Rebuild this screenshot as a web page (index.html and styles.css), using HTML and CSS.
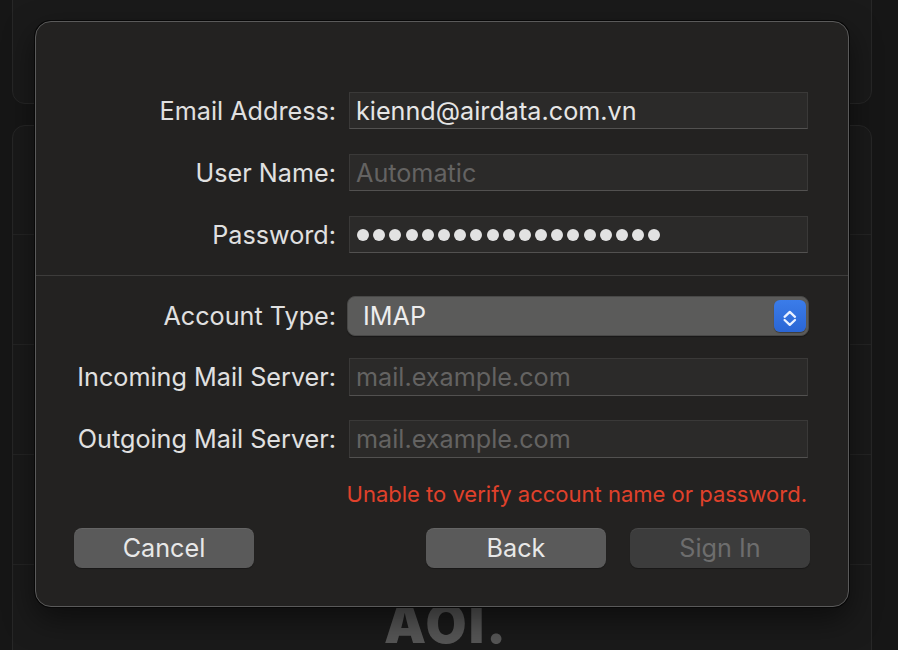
FILE: index.html
```html
<!DOCTYPE html>
<html lang="en">
<head>
<meta charset="utf-8">
<title>Account</title>
<link rel="stylesheet" href="styles.css">
</head>
<body>
<div class="backdrop">
  <div class="card card-top"></div>
  <div class="card card-list">
    <div class="list-row"></div>
    <div class="list-row"></div>
    <div class="list-row"></div>
    <div class="list-row"></div>
    <div class="list-row logo-row"><div class="logo">AOI.</div></div>
  </div>
</div>

<div class="dialog">
  <div class="section section-account">
    <div class="form-row">
      <div class="label">Email Address:</div>
      <div class="field"><span class="value">kiennd@airdata.com.vn</span></div>
    </div>
    <div class="form-row">
      <div class="label">User Name:</div>
      <div class="field"><span class="placeholder">Automatic</span></div>
    </div>
    <div class="form-row">
      <div class="label">Password:</div>
      <div class="field"><span class="dots" aria-label="password"><i></i><i></i><i></i><i></i><i></i><i></i><i></i><i></i><i></i><i></i><i></i><i></i><i></i><i></i><i></i><i></i><i></i><i></i><i></i></span></div>
    </div>
  </div>
  <div class="divider"></div>
  <div class="section section-server">
    <div class="form-row row-popup">
      <div class="label">Account Type:</div>
      <div class="popup">
        <span class="popup-value">IMAP</span>
        <span class="stepper">
          <svg width="32" height="32" viewBox="0 0 32 32"><path d="M10.6 16.8 L15.8 11.9 L21 16.8 M10.6 20 L15.8 24.9 L21 20" fill="none" stroke="#eaf1ff" stroke-width="2.3" stroke-linecap="round" stroke-linejoin="round"/></svg>
        </span>
      </div>
    </div>
    <div class="form-row row-server">
      <div class="label">Incoming Mail Server:</div>
      <div class="field field-tall"><span class="placeholder">mail.example.com</span></div>
    </div>
    <div class="form-row row-server row-out">
      <div class="label">Outgoing Mail Server:</div>
      <div class="field field-tall"><span class="placeholder">mail.example.com</span></div>
    </div>
  </div>
  <div class="error">Unable to verify account name or password.</div>
  <div class="buttons">
    <div class="btn">Cancel</div>
    <div class="btn btn-back">Back</div>
    <div class="btn btn-disabled">Sign In</div>
  </div>
</div>
</body>
</html>
```
FILE: styles.css
```css
* { box-sizing: border-box; }
html, body { margin: 0; height: 650px; overflow: hidden; }
body {
  background: #161616;
  font-family: Inter, "Noto Sans", sans-serif;
  position: relative;
}
.backdrop {
  display: flex;
  flex-direction: column;
  gap: 21px;
  padding: 0 26px 0 12px;
  margin-top: -20px;
  height: 670px;
  overflow: hidden;
}
.card {
  background: #1a1a1a;
  border: 1px solid #272727;
  border-radius: 13px;
}
.card-top { height: 124px; flex: none; }
.card-list { display: flex; flex-direction: column; flex: none; height: 700px; }
.list-row { height: 110px; border-bottom: 1px solid #242424; flex: none; }
.list-row:first-child { height: 109px; }
.logo-row { display: flex; justify-content: center; padding-top: 33px; padding-left: 8px; }
.logo {
  font-family: Inter, sans-serif;
  font-weight: 900;
  font-size: 53px;
  line-height: 53px;
  height: 53px;
  color: #565656;
  letter-spacing: 2px;
}

.dialog {
  position: absolute;
  left: 35px;
  top: 21px;
  width: 814px;
  height: 586px;
  background: #232221;
  border: 1px solid #5a5a5a;
  border-radius: 16px;
  box-shadow: 0 0 0 1px #080808, 0 12px 30px rgba(0,0,0,0.5);
  padding: 70px 40px 0 38px;
  display: flex;
  flex-direction: column;
}
.section { display: flex; flex-direction: column; }
.section-account { gap: 25px; }
.form-row { display: flex; align-items: center; gap: 13px; height: 37px; }
.label {
  width: 262px;
  flex: none;
  text-align: right;
  color: #e0e0e0;
  font-size: 25.2px;
  white-space: nowrap;
}
.field {
  flex: 1;
  height: 37px;
  background: #2b2a29;
  border: 1px solid #3a3938;
  border-bottom-color: #525150;
  display: flex;
  align-items: center;
  padding-left: 6px;
  font-size: 25.2px;
  white-space: nowrap;
}
.field-tall { height: 38px; }
.value { color: #e6e6e6; }
.placeholder { color: #646362; }
.dots { display: flex; gap: 4.2px; padding-left: 1px; }
.dots i { width: 12px; height: 12px; border-radius: 50%; background: #e2e2e2; display: block; }

.divider {
  height: 1px;
  background: #3d3c3b;
  margin: 22px -40px 0 -38px;
}
.section-server { margin-top: 20px; }
.row-popup { height: 40px; }
.row-server { height: 38px; margin-top: 22px; }
.row-out { margin-top: 24px; }
.popup {
  flex: 1;
  height: 40px;
  margin-left: -2px;
  margin-right: -1px;
  background: #5b5b5a;
  border: 1px solid #484847;
  border-radius: 8px;
  display: flex;
  align-items: center;
  justify-content: space-between;
  padding: 0 2px 0 15px;
  box-shadow: 0 1px 1px rgba(0,0,0,0.3);
}
.popup-value { color: #ededed; font-size: 25.2px; }
.stepper {
  width: 32px;
  height: 32px;
  border-radius: 6px;
  background: linear-gradient(#3b7ce9, #2b66d5);
  box-shadow: 0 1px 1px rgba(0,0,0,0.35);
  display: block;
}
.stepper svg { display: block; }
.error {
  margin-top: 24px;
  text-align: right;
  color: #e0412b;
  font-size: 22px;
  line-height: 24px;
  padding-right: 1px;
  white-space: nowrap;
}
.buttons { display: flex; gap: 24px; margin-top: 22px; margin-right: -2px; }
.btn {
  width: 180px;
  height: 40px;
  border-radius: 8px;
  background: #5a5a5a;
  color: #e8e8e8;
  font-size: 25.2px;
  display: flex;
  align-items: center;
  justify-content: center;
  box-shadow: inset 0 1px 0 rgba(255,255,255,0.07), 0 1px 1px rgba(0,0,0,0.3);
}
.btn-back { margin-left: auto; }
.btn-disabled { background: #3c3c3c; color: #6d6d6d; }
```
